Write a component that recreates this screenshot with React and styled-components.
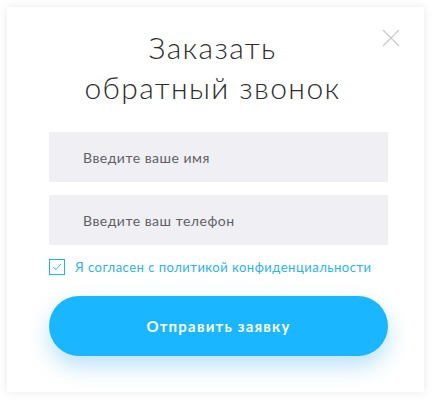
import React from "react";
import styled, { createGlobalStyle } from "styled-components";

const GlobalStyle = createGlobalStyle`
  html, body {
    margin: 0;
    padding: 0;
    background: #ffffff;
  }
  body {
    font-family: "Lato", "Noto Sans", sans-serif;
  }
`;

const Page = styled.div`
  padding: 7px 9px 9px 7px;
`;

const Modal = styled.div`
  position: relative;
  width: 417px;
  height: 385px;
  box-sizing: border-box;
  background: #fff;
  box-shadow: 0 0 9px rgba(0, 0, 0, 0.09);
  padding: 20px 36px 0 42px;
`;

const Close = styled.button`
  position: absolute;
  top: 22px;
  right: 24px;
  width: 18px;
  height: 18px;
  padding: 0;
  border: 0;
  background: none;
  cursor: pointer;
  svg {
    display: block;
  }
`;

const Title = styled.h2`
  margin: 0 0 0 -12px;
  font-family: "Lato", "Noto Sans", sans-serif;
  font-weight: 300;
  font-size: 30px;
  line-height: 40px;
  letter-spacing: 1.4px;
  color: #2d2d2d;
  text-align: center;
`;

const Form = styled.form`
  display: flex;
  flex-direction: column;
  margin-top: 25px;
`;

const Field = styled.input`
  height: 50px;
  border: 0;
  outline: none;
  background: #efeff4;
  padding: 0 0 0 34px;
  margin-bottom: ${(p) => p.$gap || 0}px;
  font-family: "Lato", "Noto Sans", sans-serif;
  font-size: 14px;
  letter-spacing: 0.5px;
  color: #555;
  &::placeholder {
    color: #5f5f66;
  }
`;

const Agree = styled.label`
  display: flex;
  align-items: center;
  gap: 10px;
  margin-top: 14px;
  font-size: 13px;
  color: #29b2f0;
  letter-spacing: 0.5px;
`;

const Box = styled.span`
  width: 14px;
  height: 14px;
  border: 1px solid #1fb2f5;
  display: flex;
  align-items: center;
  justify-content: center;
`;

const Submit = styled.button`
  margin-top: 21px;
  height: 60px;
  border: 0;
  border-radius: 30px;
  background: #1ab6ff;
  color: #fff;
  font-family: "Lato", "Noto Sans", sans-serif;
  font-weight: 700;
  font-size: 15px;
  letter-spacing: 1.2px;
  box-shadow: 0 10px 22px rgba(26, 160, 230, 0.3);
  cursor: pointer;
`;

export default function App() {
  return (
    <>
      <GlobalStyle />
      <Page>
        <Modal>
          <Close aria-label="Закрыть">
            <svg width="18" height="18" viewBox="0 0 18 18">
              <path d="M1 1 L17 17 M17 1 L1 17" stroke="#c9c9c9" strokeWidth="1.2" fill="none" />
            </svg>
          </Close>
          <Title>
            Заказать
            <br />
            обратный звонок
          </Title>
          <Form onSubmit={(e) => e.preventDefault()}>
            <Field placeholder="Введите ваше имя" $gap={13} />
            <Field placeholder="Введите ваш телефон" />
            <Agree>
              <Box>
                <svg width="10" height="8" viewBox="0 0 10 8">
                  <path d="M1 4 L4 6.5 L9 1" stroke="#1fb2f5" strokeWidth="1" fill="none" />
                </svg>
              </Box>
              Я согласен с политикой конфиденциальности
            </Agree>
            <Submit type="submit">Отправить заявку</Submit>
          </Form>
        </Modal>
      </Page>
    </>
  );
}
